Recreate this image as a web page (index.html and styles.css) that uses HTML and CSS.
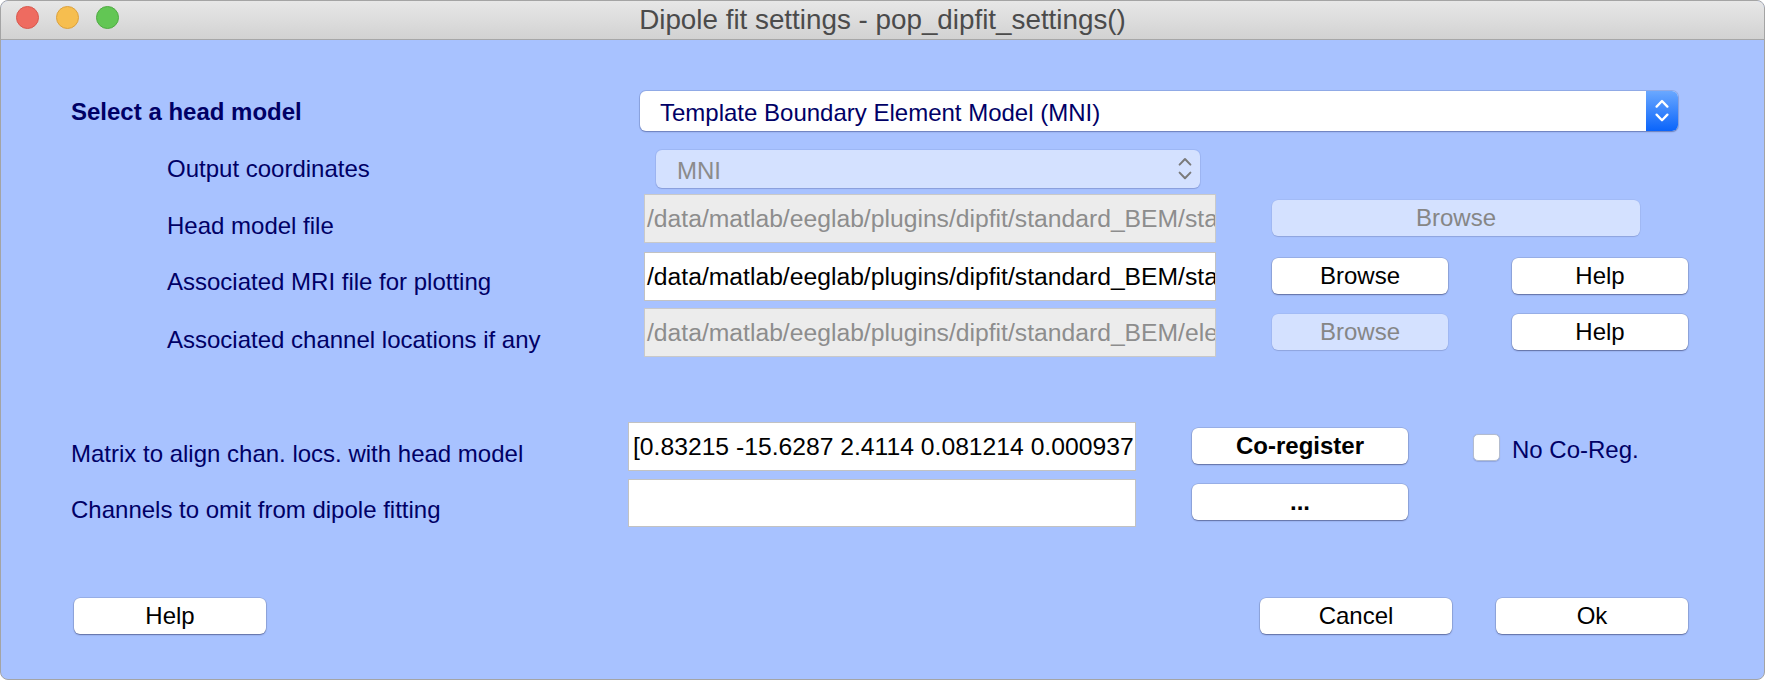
FILE: index.html
```html
<!DOCTYPE html>
<html>
<head>
<meta charset="utf-8">
<title>Dipole fit settings - pop_dipfit_settings()</title>
<link rel="stylesheet" href="styles.css">
</head>
<body>
<div class="window">
  <div class="titlebar">
    <div class="lights">
      <span class="light red"></span>
      <span class="light yellow"></span>
      <span class="light green"></span>
    </div>
    <div class="title">Dipole fit settings - pop_dipfit_settings()</div>
    <div></div>
  </div>
  <div class="content">
    <div class="row r1">
      <div class="lbl bold l1">Select a head model</div>
      <div class="popup main">
        <div class="popup-text">Template Boundary Element Model (MNI)</div>
        <div class="stepper">
          <svg width="14" height="24" viewBox="0 0 14 24"><polyline points="1.6,7.6 7,2 12.4,7.6" fill="none" stroke="#fff" stroke-width="2.3" stroke-linecap="round" stroke-linejoin="round"/><polyline points="1.6,15.6 7,21.2 12.4,15.6" fill="none" stroke="#fff" stroke-width="2.3" stroke-linecap="round" stroke-linejoin="round"/></svg>
        </div>
      </div>
    </div>
    <div class="row r2">
      <div class="lbl l2">Output coordinates</div>
      <div class="popup off">
        <div class="popup-text">MNI</div>
        <svg class="chev" width="14" height="24" viewBox="0 0 14 24"><polyline points="1.6,7.6 7,2 12.4,7.6" fill="none" stroke="#7a7a7a" stroke-width="2" stroke-linecap="round" stroke-linejoin="round"/><polyline points="1.6,15.6 7,21.2 12.4,15.6" fill="none" stroke="#7a7a7a" stroke-width="2" stroke-linecap="round" stroke-linejoin="round"/></svg>
      </div>
    </div>
    <div class="row r3">
      <div class="lbl l3">Head model file</div>
      <div class="edit path off">/data/matlab/eeglab/plugins/dipfit/standard_BEM/sta</div>
      <div class="btn off wide">Browse</div>
    </div>
    <div class="row r4">
      <div class="lbl l4">Associated MRI file for plotting</div>
      <div class="edit path">/data/matlab/eeglab/plugins/dipfit/standard_BEM/sta</div>
      <div class="btn browse">Browse</div>
      <div class="btn help">Help</div>
    </div>
    <div class="row r5">
      <div class="lbl l5">Associated channel locations if any</div>
      <div class="edit path off">/data/matlab/eeglab/plugins/dipfit/standard_BEM/ele</div>
      <div class="btn off browse">Browse</div>
      <div class="btn help">Help</div>
    </div>
    <div class="row r6">
      <div class="lbl l6">Matrix to align chan. locs. with head model</div>
      <div class="edit short">[0.83215 -15.6287 2.4114 0.081214 0.000937</div>
      <div class="btn bold action">Co-register</div>
      <div class="check"></div>
      <div class="lbl checklbl">No Co-Reg.</div>
    </div>
    <div class="row r7">
      <div class="lbl l7">Channels to omit from dipole fitting</div>
      <div class="edit short thin"></div>
      <div class="btn bold action dots">...</div>
    </div>
    <div class="row r8">
      <div class="btn foot">Help</div>
      <div class="btn foot cancel">Cancel</div>
      <div class="btn foot ok">Ok</div>
    </div>
  </div>
</div>
</body>
</html>
```

FILE: styles.css
```css
* {
  box-sizing: border-box;
}

body {
  margin: 0;
  background: #ffffff;
  font-family: "Liberation Sans", Arial, Helvetica, sans-serif;
}

.window {
  width: 1765px;
  height: 680px;
  border: 1px solid #a4a4a4;
  border-radius: 8px;
  overflow: hidden;
  background: #a8c2ff;
}

/* ---------- title bar ---------- */
.titlebar {
  height: 39px;
  border-bottom: 1px solid #a7a7a7;
  background: linear-gradient(#e7e7e7, #d2d2d2);
  display: grid;
  grid-template-columns: 1fr auto 1fr;
}

.lights {
  display: flex;
  gap: 17px;
  padding: 5px 0 0 15px;
}

.light {
  width: 23px;
  height: 23px;
  border-radius: 50%;
}

.red {
  background: #ee6b60;
  border: 1px solid #d8584d;
}

.yellow {
  background: #f6be4f;
  border: 1px solid #dca13c;
}

.green {
  background: #62c654;
  border: 1px solid #4fab42;
}

.title {
  font-size: 27.8px;
  line-height: 38px;
  color: #4b4b4b;
  white-space: nowrap;
}

/* ---------- content rows ---------- */
.content {
  padding-top: 51px;
}

.row {
  display: flex;
  align-items: flex-start;
}

.lbl {
  flex: none;
  color: #000066;
  font-size: 24px;
  line-height: 24px;
  white-space: nowrap;
}

.bold {
  font-weight: bold;
}

.r1 { padding-left: 70px; }
.l1 { width: 569px; margin-top: 9px; }

.r2 { margin-top: 19px; padding-left: 166px; }
.l2 { width: 489px; margin-top: 7px; }

.r3 { margin-top: 6px; padding-left: 166px; }
.l3 { width: 477px; margin-top: 20px; }

.r4 { margin-top: 9px; padding-left: 166px; }
.l4 { width: 477px; margin-top: 18px; }

.r5 { margin-top: 7px; padding-left: 166px; }
.l5 { width: 477px; margin-top: 20px; }

.r6 { margin-top: 65px; padding-left: 70px; }
.l6 { width: 557px; margin-top: 20px; }

.r7 { margin-top: 8px; padding-left: 70px; }
.l7 { width: 557px; margin-top: 19px; }

.r8 {
  margin-top: 71px;
  padding-left: 73px;
  padding-right: 76px;
}

/* ---------- popup menus ---------- */
.popup {
  flex: none;
  display: flex;
  align-items: center;
  border-radius: 6px;
}

.popup.main {
  width: 1038px;
  height: 40px;
  background: #ffffff;
  box-shadow: 0 0 0 1px rgba(70, 90, 150, 0.22), 0 1px 1.5px rgba(0, 0, 60, 0.3);
}

.popup-text {
  flex: 1;
  padding-top: 3px;
  padding-left: 20px;
  font-size: 24px;
  line-height: 24px;
  color: #000066;
  white-space: nowrap;
}

.stepper {
  align-self: stretch;
  width: 32px;
  border-radius: 0 6px 6px 0;
  background: linear-gradient(#6aa8ff, #0a64fb);
  display: flex;
  align-items: center;
  justify-content: center;
}

.popup.off {
  width: 544px;
  height: 38px;
  background: #d4e1ff;
  box-shadow: 0 0 0 1px rgba(70, 90, 150, 0.1), 0 1px 1px rgba(0, 0, 60, 0.14);
}

.popup.off .popup-text {
  padding-left: 21px;
  color: #8b8b8b;
}

.chev {
  margin-right: 8px;
}

/* ---------- edit fields ---------- */
.edit {
  flex: none;
  height: 49px;
  border: 1px solid #c2c2c2;
  background: #ffffff;
  color: #000000;
  font-size: 24.7px;
  line-height: 47px;
  padding-left: 2px;
  white-space: nowrap;
  overflow: hidden;
}

.edit.off {
  background: #ececec;
  border-color: #c9c9c9;
  color: #8d8d8d;
}

.edit.path {
  width: 572px;
}

.edit.short {
  width: 508px;
  padding-left: 4px;
}

.edit.thin {
  height: 48px;
}

/* ---------- buttons ---------- */
.btn {
  flex: none;
  height: 36px;
  margin-top: 6px;
  background: #ffffff;
  border-radius: 6px;
  box-shadow: 0 0 0 0.5px rgba(0, 0, 0, 0.18), 0 1px 1.5px rgba(0, 0, 50, 0.38);
  color: #000000;
  font-size: 24px;
  line-height: 36px;
  text-align: center;
  white-space: nowrap;
}

.btn.off {
  background: #d4e1ff;
  color: #868686;
  box-shadow: 0 0 0 0.5px rgba(0, 0, 0, 0.07), 0 1px 1px rgba(0, 0, 50, 0.12);
}

.btn.wide {
  width: 368px;
  margin-left: 56px;
}

.btn.browse {
  width: 176px;
  margin-left: 56px;
}

.btn.help {
  width: 176px;
  margin-left: 64px;
}

.btn.action {
  width: 216px;
  margin-left: 56px;
}

.btn.dots {
  margin-top: 5px;
}

.btn.foot {
  width: 192px;
  margin-top: 0;
}

.btn.cancel {
  margin-left: auto;
}

.btn.ok {
  margin-left: 44px;
}

/* ---------- checkbox ---------- */
.check {
  flex: none;
  width: 27px;
  height: 27px;
  margin-top: 12px;
  margin-left: 65px;
  background: #ffffff;
  border: 1px solid #b3bccf;
  border-radius: 5px;
  box-shadow: 0 0.5px 1px rgba(0, 0, 50, 0.15);
}

.checklbl {
  margin-left: 12px;
  margin-top: 16px;
}
```
